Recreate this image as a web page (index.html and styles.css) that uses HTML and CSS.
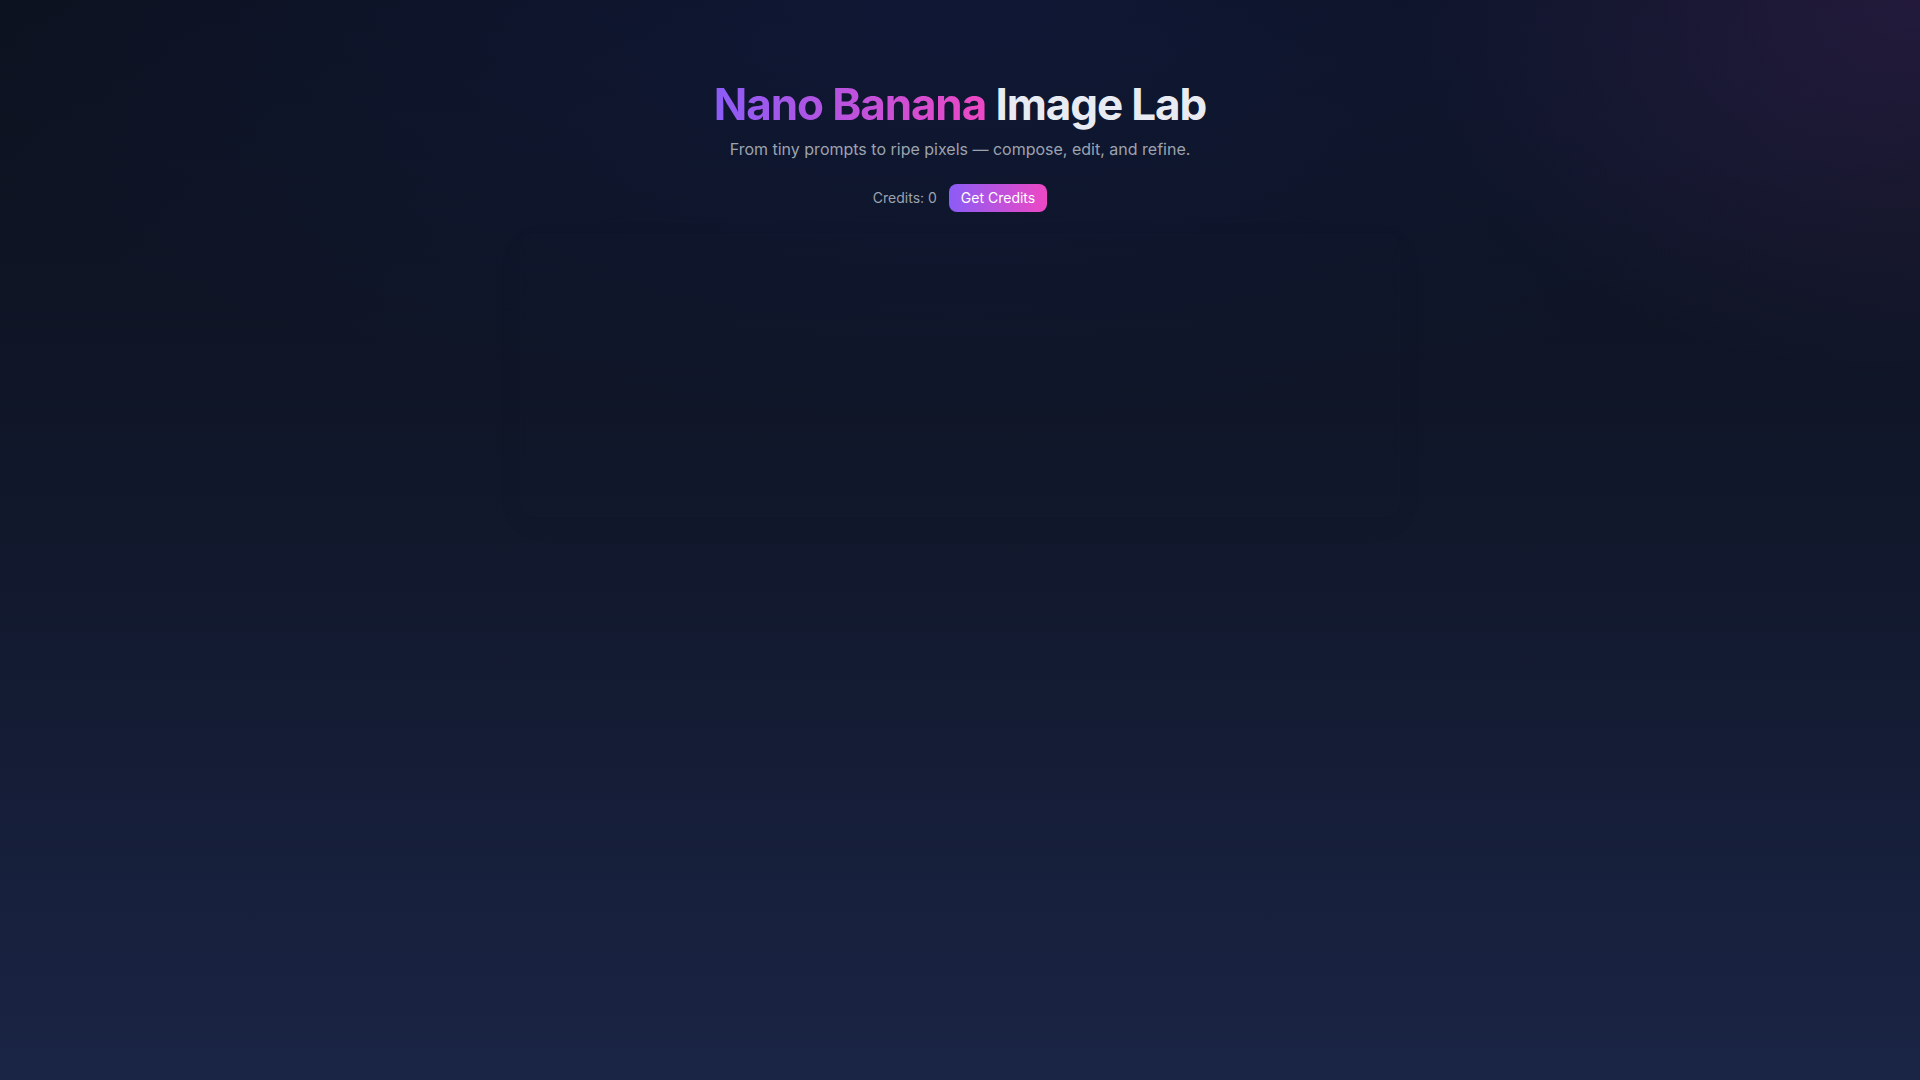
FILE: index.html
```html
<!DOCTYPE html>
<html lang="en">
<head>
<meta charset="utf-8">
<title>Nano Banana Image Lab</title>
<link rel="stylesheet" href="styles.css">
</head>
<body>
<div class="page">
  <header class="hero">
    <h1 class="title"><span class="grad">Nano Banana</span> Image Lab</h1>
    <p class="subtitle">From tiny prompts to ripe pixels — compose, edit, and refine.</p>
    <div class="credits">
      <span class="credits-label">Credits: 0</span>
      <button class="btn-credits" type="button">Get Credits</button>
    </div>
  </header>
  <main class="panel">
    <div class="panel-top"></div>
    <div class="panel-bottom"></div>
  </main>
</div>
</body>
</html>
```

FILE: styles.css
```css
html, body {
  margin: 0;
  padding: 0;
  height: 100%;
}

body {
  font-family: "Inter", "Noto Sans", "Liberation Sans", sans-serif;
  color: #e5e7eb;
  background-color: #121a30;
  background-image:
    radial-gradient(520px 380px at 100% 0%, rgba(150, 70, 200, 0.16), rgba(150, 70, 200, 0) 100%),
    radial-gradient(1100px 420px at 50% 0%, rgba(20, 35, 100, 0.35), rgba(20, 35, 100, 0) 100%),
    linear-gradient(180deg, #0c111c 0%, #10172a 45%, #1a2444 100%);
  background-repeat: no-repeat;
  min-height: 100vh;
}

.page {
  min-height: 100vh;
  display: flex;
  flex-direction: column;
  align-items: center;
  padding-top: 80px;
  box-sizing: border-box;
}

.hero {
  display: flex;
  flex-direction: column;
  align-items: center;
}

.title {
  margin: 0;
  font-size: 44px;
  line-height: 48px;
  font-weight: 700;
  letter-spacing: -0.025em;
  color: #e9ebf2;
}

.grad {
  background: linear-gradient(90deg, #8b5cf6 0%, #ee48c4 100%);
  -webkit-background-clip: text;
  background-clip: text;
  color: transparent;
}

.subtitle {
  margin: 9px 0 0;
  font-size: 16px;
  line-height: 24px;
  color: #9ca3af;
}

.credits {
  margin-top: 23px;
  display: flex;
  align-items: center;
  gap: 12px;
}

.credits-label {
  font-size: 14px;
  line-height: 20px;
  color: #9ca3af;
}

.btn-credits {
  font-family: inherit;
  font-size: 14px;
  line-height: 20px;
  font-weight: 400;
  color: #ffffff;
  border: none;
  border-radius: 8px;
  padding: 4px 12px;
  background: linear-gradient(90deg, #8b5cf6 0%, #ee48c4 100%);
  cursor: pointer;
}

.panel {
  margin-top: 22px;
  width: 880px;
  height: 283px;
  display: flex;
  flex-direction: column;
  border: 1px solid rgba(255, 255, 255, 0.008);
  border-radius: 16px;
  background: transparent;
  box-shadow: 0 8px 30px rgba(0, 0, 0, 0.04);
  box-sizing: border-box;
}

.panel-top {
  height: 142px;
  border-bottom: 1px solid rgba(255, 255, 255, 0.006);
}

.panel-bottom {
  flex: 1;
}
```
